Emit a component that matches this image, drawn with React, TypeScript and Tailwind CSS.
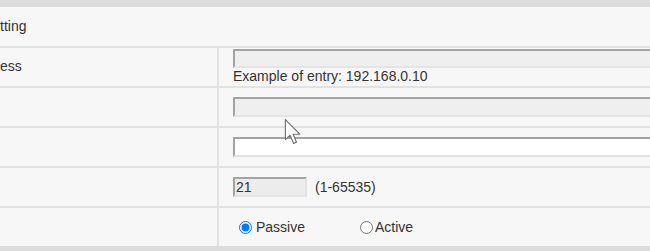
export default function App() {
  const inset =
    "border-2 border-t-[#a3a3a3] border-l-[#a3a3a3] border-b-[#e4e4e4] border-r-[#e4e4e4] outline-none";

  return (
    <div className="relative w-[650px] h-[251px] overflow-hidden bg-[#dcdcdc] font-['Liberation_Sans',Arial,sans-serif] text-[14px] text-[#333]">
      {/* section header */}
      <div className="mt-[7px] h-[41px] flex items-center bg-[#f7f7f7] border-b-2 border-[#e2e2e2]">
        <span>tting</span>
      </div>

      <div className="grid grid-cols-[219px_1fr] bg-[#f7f7f7]">
        {/* address */}
        <div className="h-[40px] flex items-center border-r-2 border-b-2 border-[#e2e2e2]">
          <span className="-mt-[2px]">ess</span>
        </div>
        <div className="h-[40px] pl-[14px] pt-[1px] flex flex-col border-b-2 border-[#e2e2e2]">
          <input disabled className={`${inset} w-[440px] h-[19px] bg-[#efefef] shrink-0`} />
          <span className="leading-[17px]">Example of entry: 192.168.0.10</span>
        </div>

        {/* second input */}
        <div className="h-[40px] border-r-2 border-b-2 border-[#e2e2e2]" />
        <div className="h-[40px] pl-[14px] flex items-center border-b-2 border-[#e2e2e2]">
          <input disabled className={`${inset} w-[440px] h-[20px] bg-[#efefef] shrink-0`} />
        </div>

        {/* third input */}
        <div className="h-[40px] border-r-2 border-b-2 border-[#e2e2e2]" />
        <div className="h-[40px] pl-[14px] flex items-center border-b-2 border-[#e2e2e2]">
          <input className={`${inset} w-[440px] h-[20px] bg-white shrink-0`} />
        </div>

        {/* port */}
        <div className="h-[40px] border-r-2 border-b-2 border-[#e2e2e2]" />
        <div className="h-[40px] pl-[14px] flex items-center border-b-2 border-[#e2e2e2]">
          <input
            readOnly
            value="21"
            className={`${inset} w-[74px] h-[20px] bg-[#ececec] px-[1px] text-[14px] text-[#333] shrink-0`}
          />
          <span className="ml-[8px]">(1-65535)</span>
        </div>

        {/* mode */}
        <div className="h-[38px] border-r-2 border-[#e2e2e2]" />
        <div className="h-[38px] flex items-center">
          <input
            type="radio"
            name="mode"
            defaultChecked
            className="m-0 ml-[20px] w-[13px] h-[13px] accent-[#0075ff]"
          />
          <span className="ml-[4px]">Passive</span>
          <input type="radio" name="mode" className="m-0 ml-[55px] w-[13px] h-[13px]" />
          <span className="ml-[2px]">Active</span>
        </div>
      </div>

      {/* mouse pointer */}
      <svg
        className="absolute left-[284px] top-[118px]"
        width="18"
        height="28"
        viewBox="0 0 13 20"
      >
        <path
          d="M1 1 V15.5 L4.4 12.3 L6.9 18.3 L9 17.4 L6.6 11.6 H11.4 Z"
          fill="#fff"
          stroke="#6f6f6f"
          strokeWidth="0.8"
          strokeLinejoin="round"
        />
      </svg>
    </div>
  );
}
